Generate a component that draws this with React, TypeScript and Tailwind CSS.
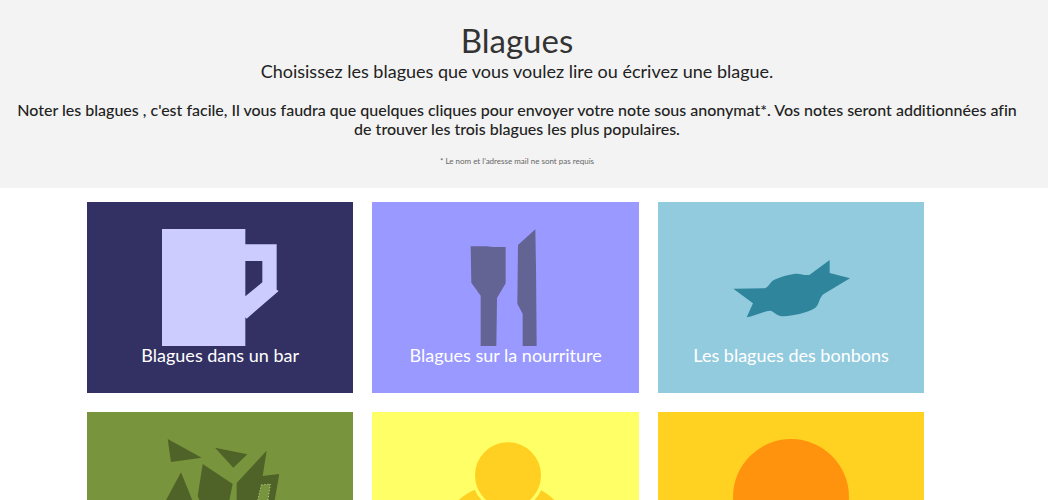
import type { ReactNode } from "react";

type Category = {
  id: string;
  title?: string;
  card: string;
  viewBox: string;
  drawing: ReactNode;
};

const categories: Category[] = [
  {
    id: "bar",
    title: "Blagues dans un bar",
    card: "bg-[#333163]",
    viewBox: "247 101 351 351",
    drawing: (
      <path
        fill="#ccccff"
        fillRule="evenodd"
        d="M247 101H497V147H591V283L597 287L501 370L497 366V452H247ZM497 197V303L548 261V197Z"
      />
    ),
  },
  {
    id: "nourriture",
    title: "Blagues sur la nourriture",
    card: "bg-[#9999ff]",
    viewBox: "247 101 351 351",
    drawing: (
      <g fill="#636394">
        <path d="M318 153H365L386 155H423V264L397 308L395 452H348V301L320 262Z" />
        <path d="M512 102L514 220L516 452H474V355L458 325L460 149Z" />
      </g>
    ),
  },
  {
    id: "bonbons",
    title: "Les blagues des bonbons",
    card: "bg-[#93cbde]",
    viewBox: "247 101 351 351",
    drawing: (
      <path
        fill="#2f859c"
        d="M248 280L342 279C354 276 356 261 371 253Q400 239 434 235C450 234 461 241 476 239L537 194V233L598 249L518 297C505 307 506 330 492 339C469 353 424 362 400 363C378 364 370 347 358 346C344 346 310 362 288 366L307 324Z"
      />
    ),
  },
  {
    id: "vert",
    card: "bg-[#78943c]",
    viewBox: "247 117 351 351",
    drawing: (
      <>
        <g fill="#4f6228">
          <path d="M264 117L366 173L274 186Z" />
          <path d="M406 143L503 163L461 203Z" />
          <path d="M304 217L340 306L322 420L254 310Z" />
          <path d="M369 192L459 252L445 320L400 400L354 288Z" />
          <path d="M561 152L549 228L599 222L578 340L500 468L440 468L471 380V249Z" />
        </g>
        <path
          d="M545 255L572 252L562 320L526 336Z"
          fill="#78943c"
          stroke="#b5c68c"
          strokeWidth="3"
          strokeDasharray="4 5"
        />
      </>
    ),
  },
  {
    id: "jaune",
    card: "bg-[#ffff66]",
    viewBox: "247 117 351 351",
    drawing: (
      <g fill="#ffd022">
        <path d="M248 468V372C248 306 325 250 430 250S598 306 598 372V468Z" />
        <circle cx="430" cy="226" r="104" stroke="#ffff66" strokeWidth="10" />
      </g>
    ),
  },
  {
    id: "orange",
    card: "bg-[#ffd222]",
    viewBox: "247 117 351 351",
    drawing: <circle cx="421" cy="291" r="174" fill="#ff930e" />,
  },
];

function CategoryCard({ title, card, viewBox, drawing }: Category) {
  return (
    <a href="#" className={`flex min-h-[191px] flex-col items-center pt-[27px] pb-[29px] ${card}`}>
      <svg viewBox={viewBox} className="size-[117px]" aria-hidden="true">
        {drawing}
      </svg>
      {title && <h2 className="text-[18px] leading-[18px] text-white">{title}</h2>}
    </a>
  );
}

export default function App() {
  return (
    <div className="min-h-screen bg-white pr-0.5 font-[Lato,sans-serif] [font-variant-ligatures:none]">
      <header className="bg-[#f3f3f3] pt-5 pr-6 pb-5 pl-2.5 text-center text-[#222222]">
        <h1 className="text-[33px] leading-[41px] text-[#333333]">Blagues</h1>
        <p className="text-[18px] leading-5">
          Choisissez les blagues que vous voulez lire ou écrivez une blague.
        </p>
        <p className="mt-[19px] text-[16px] leading-[19px] font-medium">
          Noter les blagues , c'est facile, Il vous faudra que quelques cliques pour envoyer votre
          note sous anonymat*. Vos notes seront additionnées afin de trouver les trois blagues les
          plus populaires.
        </p>
        <p className="mt-4 text-[8px] leading-[14px] text-[#666666]">
          * Le nom et l'adresse mail ne sont pas requis
        </p>
      </header>
      <main className="mt-3.5 ml-[8.3%] grid w-[79.9%] grid-cols-3 gap-[19px]">
        {categories.map((category) => (
          <CategoryCard key={category.id} {...category} />
        ))}
      </main>
    </div>
  );
}
